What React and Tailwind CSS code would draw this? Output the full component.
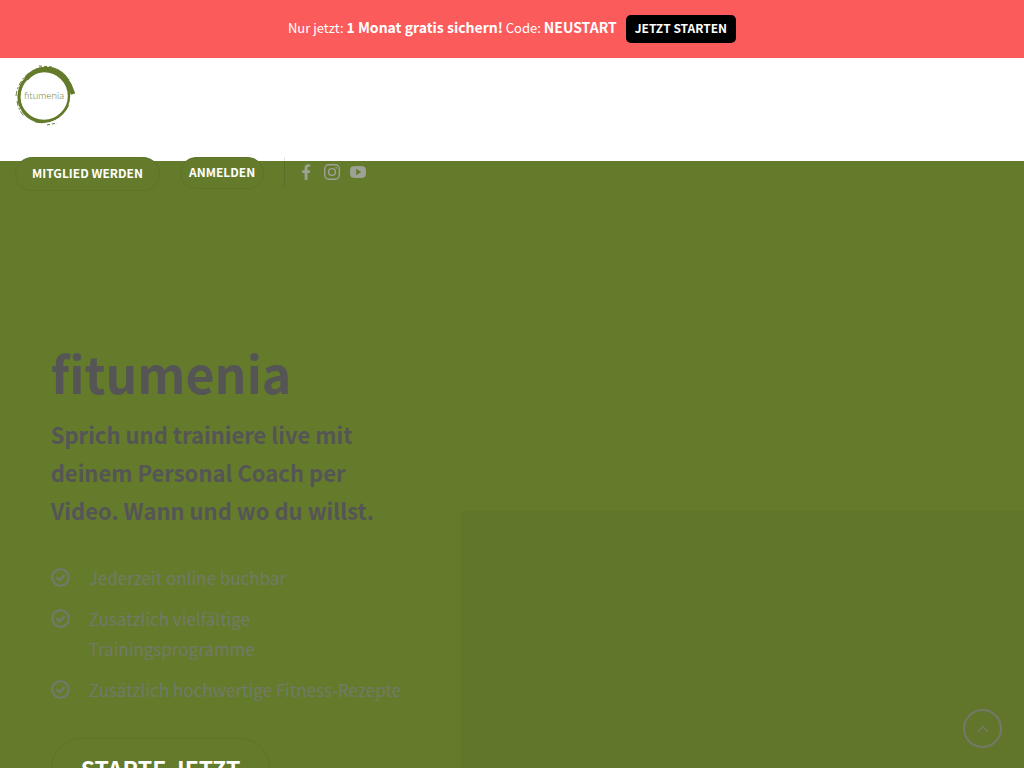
const benefits = [
  "Jederzeit online buchbar",
  "Zusätzlich vielfältige Trainingsprogramme",
  "Zusätzlich hochwertige Fitness-Rezepte",
];

function Logo() {
  return (
    <svg viewBox="0 0 60 62" className="h-[62px] w-[60px]" role="img" aria-label="fitumenia">
      <g fill="none" stroke="#647b2c">
        <circle cx="29" cy="31" r="25" strokeWidth="2.4" />
        <path d="M11 14C22 1 41 1 50 13C53 17 56 22 58 29" strokeWidth="4.6" />
        <path d="M20 5C31 0 44 5 50 12" strokeWidth="2" />
        <path d="M11 14C4 22 2 33 6 42C9 49 15 54 22 56" strokeWidth="3" />
        <path d="M14 8C7 13 2 22 1 31M2 36C3 42 5 47 9 51" strokeWidth="1" strokeDasharray="5 2 2 2" />
        <path d="M20 56C34 60 47 52 53 40" strokeWidth="2.4" />
        <path d="M32 60L42 58" strokeWidth="1" strokeDasharray="3 2" />
        <path d="M24 1L38 2M49 9L54 15" strokeWidth="1" strokeDasharray="3 2" />
      </g>
      <text x="29" y="34" textAnchor="middle" fontSize="10" fill="#647b2c" className="font-[Lato] font-light">
        fitumenia
      </text>
    </svg>
  );
}

function CheckIcon() {
  return (
    <svg viewBox="0 0 20 20" className="mt-[5px] size-5 shrink-0" fill="none" stroke="currentColor" aria-hidden="true">
      <circle cx="9.5" cy="9.5" r="8.3" strokeWidth="2.2" />
      <path d="M5.4 9.4L8.5 12.3L13.8 6.8" strokeWidth="2.6" />
    </svg>
  );
}

function App() {
  return (
    <div className="flex h-screen flex-col overflow-hidden bg-[#647b2c] font-['Noto_Sans_CJK_SC',sans-serif] text-[#717a68]">

      {/* PROMO BAR */}
      <div className="flex h-[58px] shrink-0 items-center justify-center gap-[9px] bg-[#fb5b5b] text-white">
        <p className="pb-1 text-[13px] leading-5">
          Nur jetzt: <strong className="text-sm">1 Monat gratis sichern!</strong> Code:{" "}
          <strong className="text-sm">NEUSTART</strong>
        </p>
        <a href="#start" className="rounded-[5px] bg-black px-[9px] pb-0.5 text-[12px] leading-[26px] font-bold">
          JETZT STARTEN
        </a>
      </div>

      {/* HEADER */}
      <header className="h-[103px] shrink-0 bg-white px-[15px] pt-[7px]">
        <a href="#home" className="inline-block">
          <Logo />
        </a>
      </header>

      {/* NAV */}
      <nav className="-mt-1 flex h-[34px] shrink-0 items-start px-[15px] text-[12px] font-bold text-white">
        <a href="#join" className="rounded-full border border-[#5e7429] bg-[#647b2c] px-4 pb-0.5 leading-[30px]">
          MITGLIED WERDEN
        </a>
        <a href="#login" className="ml-5 rounded-full border border-[#5e7429] bg-[#647b2c] px-2 pb-0.5 leading-7">
          ANMELDEN
        </a>
        <span className="ml-5 h-[30px] w-px bg-black/10" />
        <div className="ml-[13px] flex h-[30px] items-center gap-[10px] text-[#9da196]">
          <a href="#facebook" aria-label="Facebook">
            <svg viewBox="0 0 16 16" className="size-4" fill="currentColor">
              <path d="M6.6 16V8.9H4.2V6.2H6.6V4Q6.6 .3 10.3 .3L12.2 .4V2.8H10.8Q9.5 2.8 9.5 4.1V6.2H12.1L11.8 8.9H9.5V16Z" />
            </svg>
          </a>
          <a href="#instagram" aria-label="Instagram">
            <svg viewBox="0 0 16 16" className="size-4" fill="none" stroke="currentColor" strokeWidth="1.4">
              <rect x="0.7" y="0.7" width="14.6" height="14.6" rx="4" />
              <circle cx="8" cy="8" r="3.4" />
              <circle cx="12.2" cy="3.8" r="0.9" fill="currentColor" stroke="none" />
            </svg>
          </a>
          <a href="#youtube" aria-label="YouTube">
            <svg viewBox="0 0 16 16" className="size-4" fill="currentColor">
              <path fillRule="evenodd" d="M3 2.2Q8 1.6 13 2.2Q15.5 2.4 15.8 5Q16.2 8 15.8 11Q15.5 13.6 13 13.8Q8 14.4 3 13.8Q.5 13.6.2 11Q-.2 8 .2 5Q.5 2.4 3 2.2ZM6.2 4.8V11.2L11.2 8Z" />
            </svg>
          </a>
        </div>
      </nav>

      {/* HERO */}
      <main className="grid min-h-0 flex-1 grid-cols-[45fr_55fr]">
        <section className="px-[11%] pt-[143px]">
          <h1 className="text-[50px] leading-[76px] font-bold text-[#555]">fitumenia</h1>
          <h2 className="mt-[5px] text-[22px] leading-[38px] font-bold text-[#555]">
            Sprich und trainiere live mit deinem Personal Coach per Video. Wann und wo du willst.
          </h2>
          <ul className="mt-[34px] space-y-[11px] text-[17px] leading-[30px]">
            {benefits.map((text) => (
              <li key={text} className="flex gap-[18px]">
                <CheckIcon />
                <span>{text}</span>
              </li>
            ))}
          </ul>
          <a
            href="#start"
            className="mt-[33px] inline-block rounded-full border border-[#5e7429] px-[29px] text-[23px] leading-[58px] font-bold text-white"
          >
            STARTE JETZT
          </a>
        </section>
        <section className="mt-80 bg-[#61762b]" />
      </main>

      {/* BACK TO TOP */}
      <button
        aria-label="Nach oben"
        className="fixed right-[22px] bottom-5 flex size-[39px] items-center justify-center rounded-full border-2 border-[#717a68]"
      >
        <svg viewBox="0 0 12 8" className="h-2 w-3" fill="none" stroke="currentColor" strokeWidth="1.3">
          <path d="M1 7L6 1.5L11 7" />
        </svg>
      </button>
    </div>
  );
}

export default App;
